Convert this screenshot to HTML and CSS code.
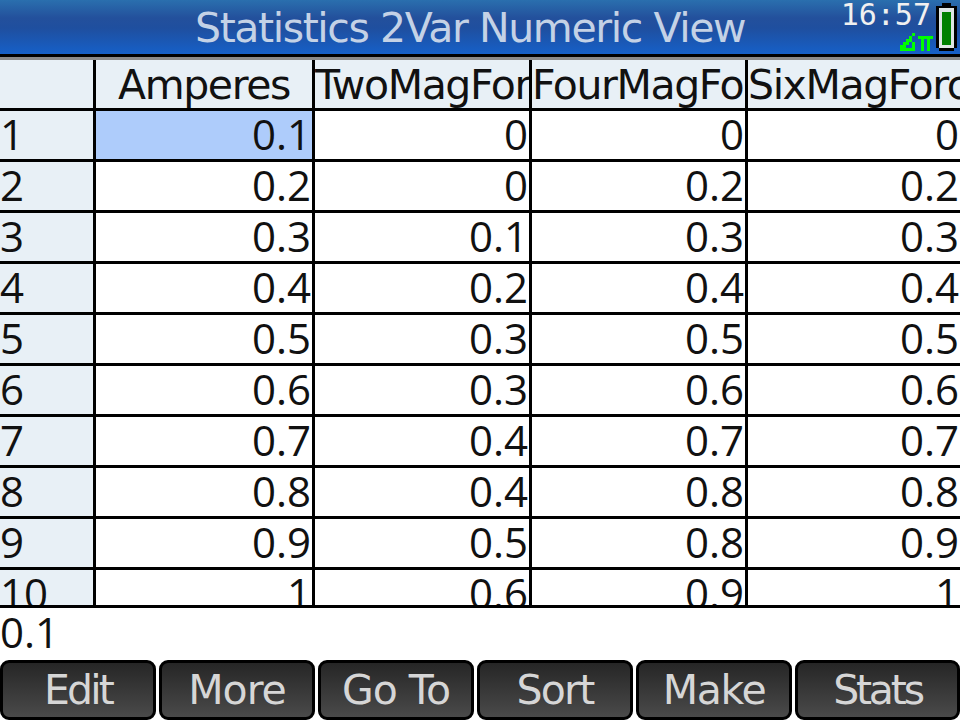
FILE: index.html
```html
<!DOCTYPE html>
<html>
<head>
<meta charset="utf-8">
<title>Statistics 2Var Numeric View</title>
<link rel="stylesheet" href="styles.css">
</head>
<body>
<div class="screen">
  <header class="titlebar">
    <div class="title">Statistics 2Var Numeric View</div>
    <div class="status">
      <div class="status-text">
        <div class="clock">16:57</div>
        <svg class="modes" width="33" height="18" viewBox="0 0 33 18" shape-rendering="crispEdges">
          <path fill="#0f0" d="M12 0h3v3h-3zM9 3h3v3H9zM6 6h6v3H6zM3 9h6v3H3zM12 9h3v6h-3zM0 12h6v3H0zM0 15h15v3H0z"/>
          <path fill="#0f0" d="M18 3h15v3H18zM21 3h3v15h-3zM27 3h3v15h-3z"/>
        </svg>
      </div>
      <svg class="battery" width="21" height="48" viewBox="0 0 21 48" shape-rendering="crispEdges">
        <path fill="#000" d="M6 0h9v3h6v42h-3v3H3v-3H0V3h6z"/>
        <path fill="#dfe6e6" d="M3 5h15v40H3z"/>
        <path fill="#008000" d="M6 9h9v33H6z"/>
      </svg>
    </div>
  </header>
  <main class="sheet">
    <div class="grid">
      <div class="corner"></div>
      <div class="head">Amperes</div>
      <div class="head over">TwoMagFor</div>
      <div class="head over">FourMagFo</div>
      <div class="head over last">SixMagForc</div>

      <div class="idx">1</div><div class="cell selected">0.1</div><div class="cell">0</div><div class="cell">0</div><div class="cell last">0</div>
      <div class="idx">2</div><div class="cell">0.2</div><div class="cell">0</div><div class="cell">0.2</div><div class="cell last">0.2</div>
      <div class="idx">3</div><div class="cell">0.3</div><div class="cell">0.1</div><div class="cell">0.3</div><div class="cell last">0.3</div>
      <div class="idx">4</div><div class="cell">0.4</div><div class="cell">0.2</div><div class="cell">0.4</div><div class="cell last">0.4</div>
      <div class="idx">5</div><div class="cell">0.5</div><div class="cell">0.3</div><div class="cell">0.5</div><div class="cell last">0.5</div>
      <div class="idx">6</div><div class="cell">0.6</div><div class="cell">0.3</div><div class="cell">0.6</div><div class="cell last">0.6</div>
      <div class="idx">7</div><div class="cell">0.7</div><div class="cell">0.4</div><div class="cell">0.7</div><div class="cell last">0.7</div>
      <div class="idx">8</div><div class="cell">0.8</div><div class="cell">0.4</div><div class="cell">0.8</div><div class="cell last">0.8</div>
      <div class="idx">9</div><div class="cell">0.9</div><div class="cell">0.5</div><div class="cell">0.8</div><div class="cell last">0.9</div>
      <div class="idx">10</div><div class="cell">1</div><div class="cell">0.6</div><div class="cell">0.9</div><div class="cell last">1</div>
    </div>
  </main>
  <div class="editline">0.1</div>
  <nav class="menu">
    <button class="key key-edit">Edit</button>
    <button class="key key-wide">More</button>
    <button class="key key-wide">Go To</button>
    <button class="key key-sort">Sort</button>
    <button class="key">Make</button>
    <button class="key key-stats">Stats</button>
  </nav>
</div>
</body>
</html>
```
FILE: styles.css
```css
* { box-sizing: border-box; }
html, body { margin: 0; padding: 0; background: #fff; }
body { width: 960px; height: 720px; overflow: hidden; font-family: "DejaVu Sans", sans-serif; color: #111; }
.screen { width: 960px; height: 720px; display: flex; flex-direction: column; }

.titlebar {
  height: 57px; flex: none; display: flex; justify-content: space-between;
  border-bottom: 3px solid #000;
  background: linear-gradient(#2a6fae 0, #23509c 18px, #1f4f9f 28px, #1660c8 54px);
  position: relative;
}
.title {
  position: absolute; left: 195px; top: 7px;
  font-size: 41px; letter-spacing: -1.4px; line-height: 42px; color: #c4d2e6; white-space: nowrap;
}
.status { margin-left: auto; display: flex; align-items: flex-start; gap: 3px; padding: 3px 3px 0 0; }
.status-text { display: flex; flex-direction: column; align-items: flex-end; width: 90px; }
.clock { font-family: "DejaVu Sans Mono", monospace; font-size: 30px; line-height: 24px; color: #f0f0f0; margin-right: 2px; }
.modes { display: block; margin: 6px 0 0 0; }
.battery { display: block; }

.sheet { height: 551px; flex: none; overflow: hidden; border-top: 3px solid #8a8a8a; border-bottom: 3px solid #000; }
.grid {
  display: grid;
  grid-template-columns: 96px 219px 217px 216px 212px;
  grid-auto-rows: 51px;
  font-family: "Open Sans", sans-serif;
  font-size: 42px;
}
.corner, .head, .idx { background: #e8f0f6; }
.corner, .head, .idx, .cell { border-right: 3px solid #000; border-bottom: 3px solid #000; overflow: hidden; white-space: nowrap; line-height: 46px; }
.last { border-right: 0; }
.head { text-align: center; font-family: "DejaVu Sans", sans-serif; font-size: 41px; letter-spacing: -1.4px; line-height: 50px; }
.head.over { text-align: left; }
.cell { text-align: right; padding-right: 1px; background: #fff; }
.selected { background: #aeccfb; }

.editline { height: 52px; flex: none; font-family: "Open Sans", sans-serif; font-size: 42px; line-height: 48px; }

.menu { flex: 1; display: flex; gap: 3px; }
.key {
  width: 156px; height: 60px; padding: 0; margin: 0; flex: none;
  border: 3px solid #000; border-radius: 9px;
  background: linear-gradient(#262626, #4a4a4a);
  color: #d6d6d6; font: 41px/54px "DejaVu Sans", sans-serif; letter-spacing: -1.4px;
}
.key-edit { letter-spacing: -2.8px; }
.key-wide { letter-spacing: -1px; }
.key-sort { letter-spacing: -1.8px; }
.key-stats { width: auto; flex: 1; letter-spacing: -3.2px; }
```
